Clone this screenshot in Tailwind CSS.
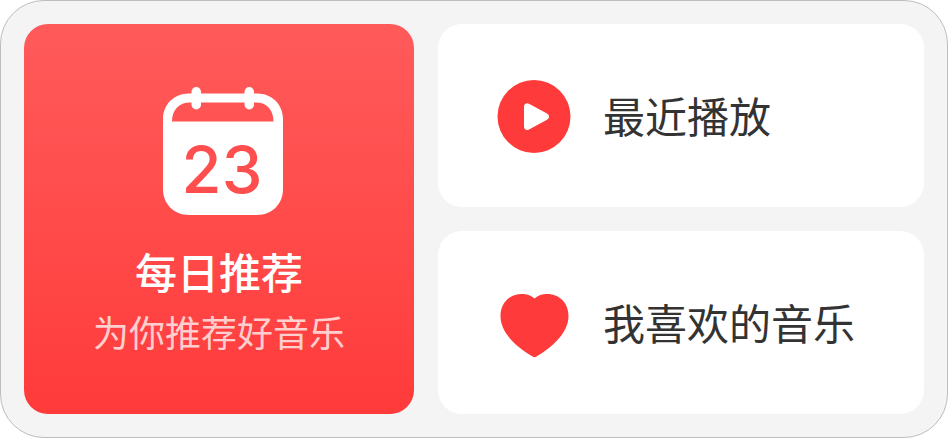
<!DOCTYPE html>
<html lang="zh-CN">
<head>
<meta charset="utf-8">
<meta name="viewport" content="width=device-width, initial-scale=1">
<title>音乐</title>
<script src="https://cdn.jsdelivr.net/npm/@tailwindcss/browser@4"></script>
</head>
<body class="bg-white font-['Noto_Sans_CJK_SC',sans-serif]">
<main class="flex min-h-screen gap-6 rounded-[44px] border border-[#bdbdbd] bg-[#f4f4f4] p-[23px]">
  <a href="#daily" class="flex aspect-square w-[390px] shrink-0 flex-col items-center rounded-3xl bg-linear-to-b from-[#ff5a5a] to-[#ff3a3a] pt-[63px] text-white">
    <svg class="ml-2 h-32 w-[120px] shrink-0" viewBox="0 0 120 128" aria-hidden="true">
      <path fill="#fff" fill-rule="evenodd" d="M26 6.500H94C109 6.500 120 17.500 120 32V102C120 117 109 128 94 128H26C11 128 0 117 0 102V32C0 17.500 11 6.500 26 6.500ZM27 15.500C16 15.500 9 23 9 34.500H110.500C110.500 23 104 15.500 93 15.500Z"/>
      <rect x="28.500" y="0" width="9.500" height="22.500" rx="4.750" fill="#fff"/>
      <rect x="81.500" y="0" width="9.500" height="22.500" rx="4.750" fill="#fff"/>
      <text x="59" y="106" text-anchor="middle" class="fill-[#ff4e4e] font-['Inter',sans-serif] text-[65px] font-medium">23</text>
    </svg>
    <span class="mt-7 text-[42px] leading-[56px] font-medium">每日推荐</span>
    <span class="mt-1 text-4xl leading-[56px] text-white/75">为你推荐好音乐</span>
  </a>
  <div class="flex min-w-0 flex-1 flex-col gap-6 text-[42px] leading-[56px] text-[#333]">
    <a href="#recent" class="flex flex-1 items-center gap-8 rounded-3xl bg-white pl-[59px]">
      <svg class="size-[74px] shrink-0" viewBox="0 0 74 74" aria-hidden="true">
        <circle cx="37" cy="37.500" r="36.500" fill="#ff3a3a"/>
        <path fill="#fff" d="M27 28C27 24.700 29.500 23.500 32 24.800L50 34.500C52.800 36 52.800 39.200 50 40.700L32 50.500C29.500 52 27 50.500 27 47.500Z"/>
      </svg>
      <span class="pb-0.5">最近播放</span>
    </a>
    <a href="#liked" class="flex flex-1 items-center gap-8 rounded-3xl bg-white pl-[59px]">
      <svg class="size-[74px] shrink-0" viewBox="0 0 74 74" aria-hidden="true">
        <path fill="#ff3a3a" d="M37.500 12.500C42 8.800 46 8 50 8C63 8 71.500 17.500 71.500 30C71.500 46 57 60 39.500 70.500C38 71.400 37 71.400 35.500 70.500C18 60 3.500 46 3.500 30C3.500 17.500 12 8 25 8C29 8 33 8.800 37.500 12.500Z"/>
      </svg>
      <span class="pb-0.5">我喜欢的音乐</span>
    </a>
  </div>
</main>
</body>
</html>
